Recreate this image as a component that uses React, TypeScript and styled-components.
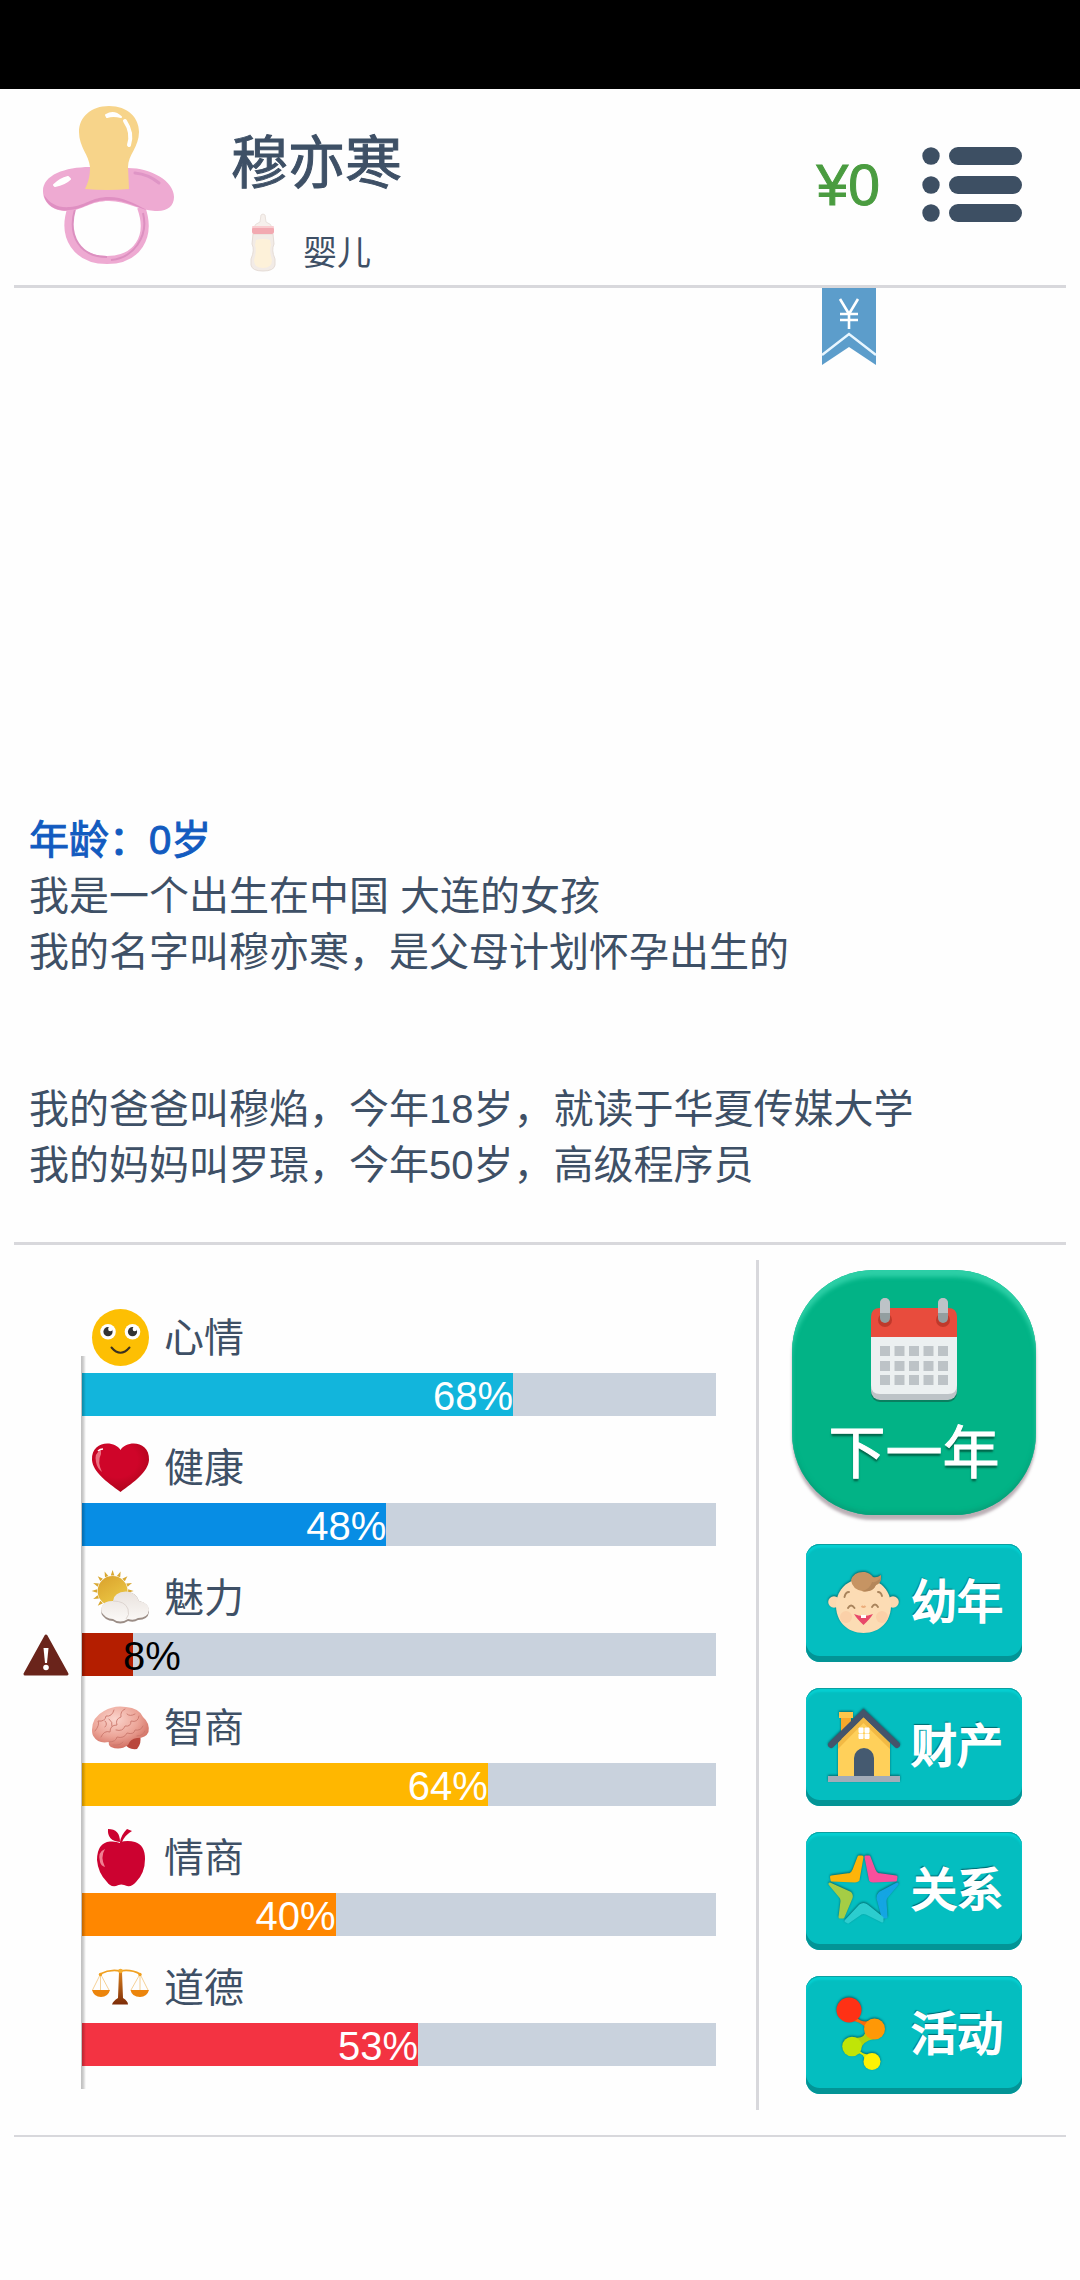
import React from "react";
import styled, { createGlobalStyle } from "styled-components";

const textFont = '"Liberation Sans", "Noto Sans CJK SC", sans-serif';
const ink = "#3e5066";
const rule = "#d8d8dc";

const GlobalStyle = createGlobalStyle`
  *, *::before, *::after { box-sizing: border-box; }
  body { margin: 0; background: #fefefe; color: ${ink}; font-family: ${textFont}; }
  h1, h2, p { margin: 0; font-weight: 400; }
  button { margin: 0; padding: 0; border: 0; background: none; color: inherit; font: inherit; cursor: pointer; }
  svg { display: block; flex: none; overflow: visible; }
`;

const Page = styled.div`
  display: flex;
  flex-direction: column;
  min-height: 100vh;
`;

const StatusBar = styled.div`
  height: 89px;
  background: #000;
`;

const Header = styled.header`
  display: flex;
  align-items: flex-start;
  gap: 56px;
  margin: 0 14px;
  padding: 16px 44px 14px 29px;
  border-bottom: 3px solid ${rule};
`;

const Identity = styled.div`
  flex: 1;
  padding-top: 25px;
`;

const Name = styled.h1`
  font-size: 57px;
  line-height: 66px;
  -webkit-text-stroke: 1px currentColor;
`;

const Stage = styled.div`
  display: flex;
  align-items: flex-end;
  gap: 28px;
  margin-top: 18px;
  padding-left: 20px;
  font-size: 34px;
  line-height: 36px;
`;

const Wallet = styled.div`
  display: flex;
  align-items: center;
  gap: 42px;
  height: 160px;
`;

const Money = styled.span`
  color: #4a9c40;
  font-size: 57px;
  line-height: 66px;
  -webkit-text-stroke: 1px currentColor;
`;

const Log = styled.main`
  flex: 1;
  display: flex;
  flex-direction: column;
  margin: 0 14px;
  padding: 0 15px 49px;
  border-bottom: 3px solid ${rule};
`;

const Ribbon = styled.button`
  align-self: flex-end;
  margin-right: 175px;
`;

const Entries = styled.article`
  display: flex;
  flex-direction: column;
  gap: 101px;
  margin-top: auto;
  font-size: 40px;
  line-height: 56px;
`;

const Age = styled.h2`
  color: #125bc0;
  font-size: 40px;
  -webkit-text-stroke: 1px currentColor;
`;

const Panel = styled.section`
  display: flex;
  margin: 15px 14px 25px;
`;

const Stats = styled.div`
  position: relative;
  flex: 1;
  display: flex;
  flex-direction: column;
  gap: 22px;
  padding: 48px 40px 0 68px;

  &::after {
    content: "";
    position: absolute;
    left: 67px;
    top: 96px;
    bottom: 21px;
    width: 5px;
    background: linear-gradient(90deg, rgba(0, 0, 0, 0.25), rgba(0, 0, 0, 0.2) 40%, rgba(0, 0, 0, 0));
  }
`;

const StatHead = styled.div`
  display: flex;
  align-items: center;
  gap: 14px;
  height: 57px;
  margin-bottom: 8px;
  padding: 2px 0 0 10px;
  font-size: 40px;
  line-height: 56px;
`;

const Track = styled.div`
  position: relative;
  height: 43px;
  background: #c9d2dd;
`;

const Fill = styled.div<{ $color: string }>`
  display: flex;
  align-items: flex-start;
  justify-content: flex-end;
  height: 100%;
  background: ${(p) => p.$color};
`;

const Percent = styled.span<{ $low: boolean }>`
  color: ${(p) => (p.$low ? "#000" : "#fff")};
  margin-right: ${(p) => (p.$low ? "-48px" : "0")};
  font-size: 40px;
  line-height: 47px;
  white-space: nowrap;
`;

const Warning = styled.svg`
  position: absolute;
  left: -59px;
  top: 1px;
`;

const Actions = styled.nav`
  display: flex;
  flex-direction: column;
  align-items: center;
  gap: 26px;
  padding: 10px 30px 16px 33px;
  border-left: 3px solid ${rule};
`;

const NextYear = styled.button`
  display: flex;
  flex-direction: column;
  align-items: center;
  gap: 18px;
  width: 244px;
  height: 245px;
  margin-bottom: 3px;
  padding-top: 27px;
  border-radius: 82px;
  background: #02b386;
  box-shadow: 0 5px 3px rgba(60, 30, 45, 0.35), inset 0 7px 4px #2ccfa6, inset 0 -3px 4px #07a079;
  color: #fff;
  font-size: 57px;
  line-height: 66px;
  text-shadow: 0 3px 2px rgba(0, 70, 50, 0.7);
  -webkit-text-stroke: 1px currentColor;
`;

const ActionButton = styled.button`
  display: flex;
  align-items: center;
  gap: 11px;
  width: 216px;
  height: 118px;
  padding: 0 0 2px 22px;
  border-radius: 14px;
  background: #04bec0;
  box-shadow: inset 0 -6px 0 #039496, inset 0 1px 0 #0b9fa0, inset 0 4px 2px #05cfd1;
  color: #fff;
  font-size: 46px;
  line-height: 56px;
  text-shadow: -1px -2px 1px rgba(0, 70, 75, 0.7);
  -webkit-text-stroke: 2px currentColor;

  svg { filter: drop-shadow(0 -1px 1px rgba(0, 70, 75, 0.7)); }
`;

const Footer = styled.footer`
  height: 145px;
  margin: 0 14px;
  border-top: 2px solid ${rule};
`;

const Pacifier = () => (
  <svg width="132" height="160" viewBox="0 0 132 160" role="img" aria-label="奶嘴">
    <path d="M29 102C18 132 34 155 64 155C94 155 109 132 98 102" fill="none" stroke="#eeaad2" strokeWidth="8" />
    <path d="M32 104C24 132 38 152 64 152M100 108C106 132 90 153 68 155" fill="none" stroke="#dc90c0" strokeWidth="2" />
    <path d="M47 62C22 62 0 70 0 86C0 99 12 107 26 106C40 105 47 96 66 96C84 96 95 105 112 106C124 107 131 101 131 92C131 76 108 63 85 63Z" fill="#eeaad2" />
    <path d="M1 90C3 101 14 107 26 105C42 104 47 95 66 95C84 95 94 103 104 105C90 98 80 92 66 92C48 92 42 101 27 102C15 103 7 99 1 90Z" fill="#df8fc2" />
    <path d="M92 68C102 69 110 73 116 78" fill="none" stroke="#df95c6" strokeWidth="3" strokeLinecap="round" />
    <path d="M66 1C85 1 96 13 96 27C96 42 85 50 85 62L86 84Q64 86 42 84C46 76 47 70 47 62C46 50 36 42 36 27C36 12 48 1 66 1Z" fill="#f7d48a" />
    <path d="M11 80Q17 74 25 72L27 74Q22 79 12 81ZM63 10Q71 5 78 12Q70 10 64 12Z" fill="#fff" stroke="#fff" strokeWidth="2" strokeLinejoin="round" />
    <path d="M82 16Q90 28 86 40" fill="none" stroke="#fff" strokeWidth="4" strokeLinecap="round" />
  </svg>
);

const Bottle = () => (
  <svg width="24" height="57" viewBox="0 0 24 57" role="img" aria-label="奶瓶">
    <path d="M10 1Q12 -1 14 1L15 8Q21 10 21 14H3Q3 10 9 8Z" fill="#f6f0ec" stroke="#e9e1dc" strokeWidth="1" />
    <path d="M2 20H22L23 30Q20 36 24 45V51Q23 57 12 57Q1 57 0 51V45Q4 36 1 30Z" fill="#f2ebe6" stroke="#e5dcd6" strokeWidth="1" />
    <path d="M5 26Q12 24 19 26L20 31Q18 37 21 46Q21 54 12 54Q3 54 3 46Q6 37 4 31Z" fill="#fdf1d9" />
    <rect x="1" y="13" width="22" height="7" rx="2" fill="#f2a9b1" />
    <rect x="1" y="12" width="22" height="2" rx="1" fill="#f9cdd0" />
  </svg>
);

const MenuIcon = () => (
  <svg width="100" height="76" viewBox="0 0 100 76" fill="#3d4f63">
    {[9, 38, 66].map((y) => (
      <React.Fragment key={y}>
        <circle cx="9" cy={y} r="8.7" />
        <rect x="27" y={y - 9} width="73" height="18" rx="9" />
      </React.Fragment>
    ))}
  </svg>
);

const RibbonIcon = () => (
  <svg width="54" height="77" viewBox="0 0 54 77">
    <path d="M0 0H54V77L27 59L0 77Z" fill="#5c9dcb" />
    <path d="M0 67L27 46L54 67" fill="none" stroke="#e8f6ff" strokeWidth="2.5" />
    <path d="M18 11L27 26L36 11M27 26V41M18 26H36M18 32H36" fill="none" stroke="#fff" strokeWidth="2.6" />
  </svg>
);

const Smile = () => (
  <svg width="58" height="57" viewBox="0 0 58 57">
    <circle cx="28.5" cy="28.5" r="28.5" fill="#fdbf03" />
    <circle cx="16" cy="22.7" r="7.8" fill="#fff" />
    <circle cx="40.5" cy="22.7" r="7.8" fill="#fff" />
    <circle cx="16" cy="22.7" r="4.6" fill="#333" />
    <circle cx="40.5" cy="22.7" r="4.6" fill="#333" />
    <circle cx="18.3" cy="20" r="2.2" fill="#fff" />
    <circle cx="42.8" cy="20" r="2.2" fill="#fff" />
    <path d="M19.5 38.5Q28.5 49 37.5 38.5" fill="none" stroke="#3a3020" strokeWidth="2" strokeLinecap="round" />
  </svg>
);

const Heart = () => (
  <svg width="58" height="57" viewBox="0 0 58 57">
    <defs>
      <radialGradient id="heart" cx="0.45" cy="0.35" r="0.7">
        <stop offset="0.5" stopColor="#cf0529" />
        <stop offset="1" stopColor="#a80519" />
      </radialGradient>
    </defs>
    <path d="M28.5 11C23 1 -1 1 0 21C1 33 15 43 28.5 53C42 43 56 33 57 21C58 1 34 1 28.5 11Z" fill="url(#heart)" />
    <path d="M9 11Q2 14 4 23Q5 29 10 33Q5 23 9 15Z" fill="#f28a96" opacity="0.8" />
    <path d="M6 12Q8 10 11 10" stroke="#fff" strokeWidth="1.5" fill="none" />
  </svg>
);

const rays = Array.from({ length: 16 }, (_, i) => i * 22.5);

const SunCloud = () => (
  <svg width="58" height="57" viewBox="0 0 58 57">
    <defs>
      <linearGradient id="sun" x1="0" y1="0" x2="0.6" y2="1">
        <stop offset="0" stopColor="#d9a02c" />
        <stop offset="1" stopColor="#ecc844" />
      </linearGradient>
      <linearGradient id="cloud" x1="0" y1="0" x2="0" y2="1">
        <stop offset="0" stopColor="#e9e2dd" />
        <stop offset="1" stopColor="#fbf9f7" />
      </linearGradient>
    </defs>
    {rays.map((a) => (
      <path key={a} d="M18.8 6.5L20.6 1L22.4 6.5Z" fill="#d9a832" transform={`rotate(${a} 20.6 22)`} />
    ))}
    <circle cx="20.6" cy="22" r="15" fill="url(#sun)" />
    <path d="M14 50Q7 45 10 38Q12 32 21 33Q22 24 34 23Q44 23 47 32Q57 34 57 43Q56 51 46 51Q42 54 36 52Q28 57 21 52Q17 52 14 50Z" fill="#9b8d86" />
    <path d="M14 48Q7 43 10 37Q12 32 21 32Q22 23 34 22.5Q44 23 47 32Q57 34 57 41Q56 49 46 49Q42 52 36 50Q28 55 21 50Q17 50 14 48Z" fill="url(#cloud)" />
    <path d="M21 32Q33 32 36 40Q38 46 34 50" fill="none" stroke="#ddd5d0" strokeWidth="1" />
  </svg>
);

const Brain = () => (
  <svg width="58" height="57" viewBox="0 0 58 57">
    <defs>
      <radialGradient id="brain" cx="0.4" cy="0.3" r="0.75">
        <stop offset="0" stopColor="#fbd5cd" />
        <stop offset="0.55" stopColor="#eca598" />
        <stop offset="1" stopColor="#cd6659" />
      </radialGradient>
    </defs>
    <path d="M33 38L48 36Q50 44 45 50Q36 51 33 45Z" fill="#b9483d" />
    <path d="M0 31Q0 18 12 12Q22 6 34 8Q47 9 51 18Q58 24 56.5 33Q54 39 45 39Q38 40 36 46Q28 52 19 48Q16 46 17 43Q6 45 2 38Q0 36 0 31Z" fill="url(#brain)" />
    <g fill="none" stroke="#c9776c" strokeWidth="0.9" strokeLinecap="round">
      <path d="M3 32Q8 26 6 22Q13 23 14 17Q20 18 22 11M9 38Q12 31 18 33Q18 26 25 26Q23 20 29 18Q28 12 33 10" />
      <path d="M17 43Q24 43 25 38Q32 40 35 34Q42 36 43 31Q49 32 51 27M24 31Q31 33 33 27Q39 28 39 22Q46 24 47 17" />
      <path d="M35 15Q38 18 43 15M13 28Q16 25 13 22M21 46Q28 47 31 43M45 37Q51 37 53 32M17 20Q21 23 20 27" />
    </g>
  </svg>
);

const Apple = () => (
  <svg width="58" height="57" viewBox="0 0 58 57">
    <path d="M28 13Q36 11 43 13Q53 16 53 30Q53 44 44 53Q40 58 35 57Q29 54 24 57Q18 58 15 53Q6 44 5 31Q5 14 18 12.5Q24 12 28 14Z" fill="#cc0230" />
    <path d="M28 13Q15 12 16 0Q28 0 28 13ZM28 13Q29 6 35 0L40 2Q33 6 30 13Z" fill="#cc0230" />
    <path d="M13 20Q5 23 8 33Q9 37 13 38Q8 28 13 20Z" fill="#f07f92" />
  </svg>
);

const Scales = () => (
  <svg width="58" height="57" viewBox="0 0 58 57">
    <defs>
      <linearGradient id="post" x1="0" y1="0" x2="0" y2="1">
        <stop offset="0" stopColor="#d9801c" />
        <stop offset="1" stopColor="#7d2c08" />
      </linearGradient>
    </defs>
    <path d="M8.5 15L0.5 31M8.5 15V31M8.5 15L17 31M48 15L39 31M48 15V31M48 15L56 31" stroke="#f2c57c" strokeWidth="0.8" fill="none" />
    <path d="M8 15Q18 10 28 12Q39 10 48 15" stroke="#f0a020" strokeWidth="1.8" fill="none" />
    <circle cx="8.5" cy="15.5" r="1.7" fill="#f0a020" />
    <circle cx="48" cy="15.5" r="1.7" fill="#f0a020" />
    <path d="M27 13H30L31 39Q36 42 36 45.5H20Q21 42 26 39Z" fill="url(#post)" />
    <circle cx="28.5" cy="12" r="2.3" fill="#f5ae2e" />
    <path d="M0 31H18Q16 38 9 38Q2 38 0 31ZM38.5 31H57Q55 38 48 38Q40 38 38.5 31Z" fill="#ec850c" />
  </svg>
);

const Calendar = () => (
  <svg width="90" height="105" viewBox="0 0 90 105">
    <rect x="2" y="20" width="86" height="85" rx="9" fill="#0a7f60" />
    <rect x="2" y="20" width="86" height="83" rx="9" fill="#bdc3c7" />
    <path d="M2 38H88V88Q88 97 79 97H11Q2 97 2 88Z" fill="#ecf0f1" />
    <path d="M2 40V20Q2 11 11 11H79Q88 11 88 20V40Z" fill="#e84c3d" />
    <circle cx="16" cy="23" r="7" fill="#c0392b" />
    <circle cx="74" cy="23" r="7" fill="#c0392b" />
    {[11, 69].map((x) => (
      <React.Fragment key={x}>
        <rect x={x} y="1" width="10" height="25" rx="5" fill="#939ea0" />
        <path d={`M${x} 16V6a5 5 0 0 1 10 0V16Z`} fill="#bdc3c7" />
      </React.Fragment>
    ))}
    {[49, 64, 78].map((y) =>
      [11, 25.5, 40, 54.5, 69].map((x) => (
        <rect key={`${x}-${y}`} x={x} y={y} width="10" height="10" fill="#bdc3c7" />
      ))
    )}
  </svg>
);

const Baby = () => (
  <svg width="72" height="74" viewBox="0 0 72 74">
    <circle cx="6" cy="37" r="5.8" fill="#fbd9b0" />
    <circle cx="65" cy="37" r="5.8" fill="#fbd9b0" />
    <path d="M35.5 14C52 14 61 24 63 38C64 56 52 68 35.5 68C19 68 7 56 8 38C10 24 19 14 35.5 14Z" fill="#fcdcb4" />
    <circle cx="18" cy="52" r="6" fill="#fbd0a8" />
    <circle cx="54" cy="52" r="6" fill="#fbd0a8" />
    <path d="M23 15Q26 6 37 7Q42 8 45 12Q49 13 53 10Q54 18 48 20Q45 27 36 26.5Q24 25 23 15Z" fill="#c69463" />
    <path d="M34 26Q42 24 44 17Q49 18 53 12Q53 18 48 20Q45 27 36 26.5Z" fill="#b5875a" />
    <g fill="none" stroke="#a9845c" strokeWidth="1.9" strokeLinecap="round">
      <path d="M16.5 32Q17.5 27 21 27M50 27Q53 27 54 31M20 43Q23 38 26.500 43M44 42Q47 37 50 42" />
    </g>
    <path d="M33.5 41Q35.5 43 37.5 41" stroke="#ecae7d" strokeWidth="2" fill="none" />
    <path d="M26 49Q35 53 45 49Q42 54 35.5 60Q29 54 26 49Z" fill="#e8486a" />
    <rect x="33" y="50" width="5" height="3" fill="#fff" />
  </svg>
);

const House = () => (
  <svg width="72" height="74" viewBox="0 0 72 74">
    <rect x="13" y="8" width="10" height="22" fill="#f6a82c" />
    <rect x="11" y="3" width="14" height="6" fill="#fbc64b" />
    <path d="M10 34L35.5 8L62 34V67H10Z" fill="#ffd05a" />
    <path d="M10 34L35.5 8L62 34V40L35.5 14L10 40Z" fill="#f2b944" />
    <path d="M3 36L35.5 4L69 36" fill="none" stroke="#45546b" strokeWidth="6" strokeLinecap="round" />
    <rect x="0" y="67" width="72" height="6" fill="#a3acb8" />
    <path d="M26 67V49A10 10 0 0 1 46 49V67Z" fill="#455a70" />
    <path d="M31 19H35V23.5H31ZM37 19H41V23.5H37ZM31 25H35V29.5H31ZM37 25H41V29.5H37Z" fill="#fff" stroke="#fff" strokeWidth="1" />
  </svg>
);

const Star = () => (
  <svg width="72" height="74" viewBox="0 0 72 74" strokeWidth="3" strokeLinejoin="round">
    <path d="M31 4L34 4L30 27Q29 28 27 28L4 27L3.5 24L22 21.5Q25 20 26 17Z" fill="#fdb409" stroke="#fdb409" />
    <path d="M38 4L41 4L46 17Q47 20 50 21.5L68 24L67.5 27L45 28Q43 28 42.5 27Z" fill="#f8509c" stroke="#f8509c" />
    <path d="M2 31L22 40Q24 42 23 45L15 64L12 64L14 48Q14 45 12 43Z" fill="#a5cd45" stroke="#a5cd45" />
    <path d="M69 31L52 40Q50 42 50 45L55 64L58 64L57 48Q57 45 59 43Z" fill="#14a5e3" stroke="#14a5e3" />
    <path d="M18 68L32 53Q35.5 50 39 53L54 65L54 68L38 60Q35.5 59 33 60L20 69Z" fill="#2ccdcf" stroke="#2ccdcf" />
  </svg>
);

const Molecule = () => (
  <svg width="72" height="74" viewBox="0 0 72 74">
    <path d="M28 20Q36 28 46 22L40 38Q38 26 26 24Z" fill="#fa6a0c" />
    <path d="M38 33Q37 43 24 40L32 54Q34 44 46 42Z" fill="#b0d210" />
    <path d="M30 52Q35 59 44 57L37 65Q37 56 28 56Z" fill="#dbe907" />
    <circle cx="21" cy="13" r="12.5" fill="#ff3115" />
    <circle cx="46.5" cy="32" r="10.5" fill="#ff9806" />
    <circle cx="24" cy="49.5" r="9.8" fill="#c0e507" />
    <circle cx="44" cy="64.5" r="8.5" fill="#fdf203" />
  </svg>
);

const stats = [
  { label: "心情", value: 68, color: "#12b5dc", Icon: Smile },
  { label: "健康", value: 48, color: "#078de4", Icon: Heart },
  { label: "魅力", value: 8, color: "#b41e00", Icon: SunCloud },
  { label: "智商", value: 64, color: "#ffb700", Icon: Brain },
  { label: "情商", value: 40, color: "#ff8700", Icon: Apple },
  { label: "道德", value: 53, color: "#f33342", Icon: Scales },
];

const actions = [
  { label: "幼年", Icon: Baby },
  { label: "财产", Icon: House },
  { label: "关系", Icon: Star },
  { label: "活动", Icon: Molecule },
];

export default function App() {
  return (
    <>
      <GlobalStyle />
      <Page>
        <StatusBar />
        <Header>
          <Pacifier />
          <Identity>
            <Name>穆亦寒</Name>
            <Stage>
              <Bottle />
              <span>婴儿</span>
            </Stage>
          </Identity>
          <Wallet>
            <Money>¥0</Money>
            <button type="button" aria-label="菜单">
              <MenuIcon />
            </button>
          </Wallet>
        </Header>

        <Log>
          <Ribbon type="button" aria-label="资金">
            <RibbonIcon />
          </Ribbon>
          <Entries>
            <div>
              <Age>年龄：0岁</Age>
              <p>我是一个出生在中国 大连的女孩</p>
              <p>我的名字叫穆亦寒，是父母计划怀孕出生的</p>
            </div>
            <div>
              <p>我的爸爸叫穆焰，今年18岁，就读于华夏传媒大学</p>
              <p>我的妈妈叫罗璟，今年50岁，高级程序员</p>
            </div>
          </Entries>
        </Log>

        <Panel>
          <Stats>
            {stats.map(({ label, value, color, Icon }) => (
              <div key={label}>
                <StatHead>
                  <Icon />
                  <span>{label}</span>
                </StatHead>
                <Track role="meter" aria-label={label} aria-valuenow={value} aria-valuemin={0} aria-valuemax={100}>
                  <Fill $color={color} style={{ width: `${value}%` }}>
                    <Percent $low={value < 15}>{value}%</Percent>
                  </Fill>
                  {value < 15 && (
                    <Warning width="46" height="42" viewBox="0 0 46 42">
                      <path d="M23 2L44 40H2Z" fill="#6a241b" stroke="#6a241b" strokeWidth="3" strokeLinejoin="round" />
                      <path d="M20.5 14H25.5L24 29H22Z" fill="#fff" />
                      <circle cx="23" cy="33.5" r="2.8" fill="#fff" />
                    </Warning>
                  )}
                </Track>
              </div>
            ))}
          </Stats>
          <Actions>
            <NextYear type="button">
              <Calendar />
              <span>下一年</span>
            </NextYear>
            {actions.map(({ label, Icon }) => (
              <ActionButton type="button" key={label}>
                <Icon />
                <span>{label}</span>
              </ActionButton>
            ))}
          </Actions>
        </Panel>
        <Footer />
      </Page>
    </>
  );
}
